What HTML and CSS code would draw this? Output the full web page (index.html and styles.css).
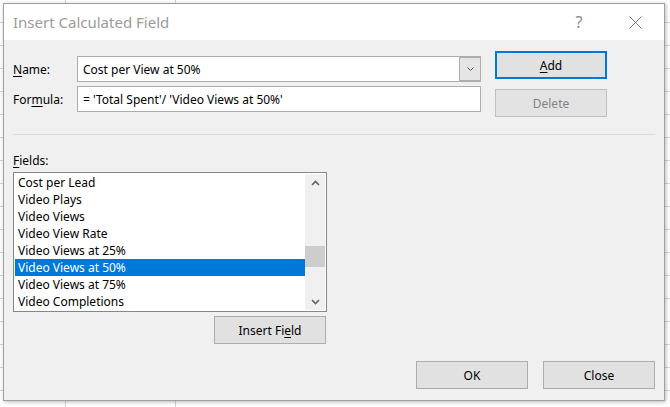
FILE: index.html
```html
<!DOCTYPE html>
<html>
<head>
<meta charset="utf-8">
<link rel="stylesheet" href="styles.css">
</head>
<body>
<div class="dialog">
  <div class="titlebar">
    <span class="title">Insert Calculated Field</span>
    <span class="help">?</span>
    <span class="close"><svg width="13" height="13" viewBox="0 0 13 13"><path d="M0.5 0.5 L12.5 12.5 M12.5 0.5 L0.5 12.5" stroke="#7a7a7a" stroke-width="1" fill="none"/></svg></span>
  </div>
  <div class="body">
    <div class="top">
      <div class="form">
        <div class="row">
          <span class="lbl"><u>N</u>ame:</span>
          <div class="combo">
            <span class="field-text">Cost per View at 50%</span>
            <span class="drop"><svg width="7" height="4" viewBox="0 0 7 4"><path d="M0.5 0.5 L3.5 3.5 L6.5 0.5" stroke="#555" stroke-width="1" fill="none"/></svg></span>
          </div>
        </div>
        <div class="row">
          <span class="lbl">For<u>m</u>ula:</span>
          <div class="textbox"><span class="field-text">= 'Total Spent'/ 'Video Views at 50%'</span></div>
        </div>
      </div>
      <div class="btncol">
        <div class="btn default"><u>A</u>dd</div>
        <div class="btn disabled">Delete</div>
      </div>
    </div>
    <div class="sep"></div>
    <div class="fields-label"><u>F</u>ields:</div>
    <div class="listbox">
      <div class="items">
        <div class="item">Cost per Lead</div>
        <div class="item">Video Plays</div>
        <div class="item">Video Views</div>
        <div class="item">Video View Rate</div>
        <div class="item">Video Views at 25%</div>
        <div class="item selected">Video Views at 50%</div>
        <div class="item">Video Views at 75%</div>
        <div class="item">Video Completions</div>
      </div>
      <div class="scrollbar">
        <div class="arrow"><svg width="9" height="6" viewBox="0 0 9 6"><path d="M1 5 L4.5 1.5 L8 5" stroke="#606060" stroke-width="1.6" fill="none"/></svg></div>
        <div class="track"><div class="thumb"></div></div>
        <div class="arrow"><svg width="9" height="6" viewBox="0 0 9 6"><path d="M1 1 L4.5 4.5 L8 1" stroke="#606060" stroke-width="1.6" fill="none"/></svg></div>
      </div>
    </div>
    <div class="insert-row">
      <div class="btn">Insert Fi<u>e</u>ld</div>
    </div>
    <div class="footer">
      <div class="btn">OK</div>
      <div class="btn">Close</div>
    </div>
  </div>
</div>
</body>
</html>
```
FILE: styles.css
```css
html, body {
  margin: 0;
  padding: 0;
}
body {
  width: 670px;
  height: 407px;
  overflow: hidden;
  background-color: #ffffff;
  background-image:
    linear-gradient(to right, transparent 65px, #d4d4d4 65px, #d4d4d4 66px, transparent 66px, transparent 175px, #d4d4d4 175px, #d4d4d4 176px, transparent 176px),
    repeating-linear-gradient(to bottom, transparent 0, transparent 22px, #d4d4d4 22px, #d4d4d4 23px);
  font-family: "Noto Sans", "Open Sans", sans-serif;
  font-size: 12px;
  color: #000;
}
.dialog {
  margin: 3px 0 0 3px;
  width: 660px;
  height: 396px;
  border: 1px solid #a0a0a0;
  background: #f0f0f0;
  box-shadow: 1px 1px 4px rgba(0, 0, 0, 0.28);
  display: flex;
  flex-direction: column;
}
.titlebar {
  height: 36px;
  background: #ffffff;
  display: flex;
  align-items: center;
  padding-left: 9px;
}
.title {
  font-size: 15px;
  color: #9b9b9b;
  flex: 1;
}
.help {
  width: 30px;
  text-align: center;
  font-size: 16px;
  color: #8a8a8a;
  margin-right: 26px;
}
.close {
  width: 30px;
  height: 13px;
  display: flex;
  justify-content: center;
  margin-right: 14px;
}
.body {
  flex: 1;
  padding: 11px 9px 0 9px;
  display: flex;
  flex-direction: column;
}
.top {
  display: flex;
  gap: 14px;
}
.form {
  width: 468px;
  margin-top: 5px;
  display: flex;
  flex-direction: column;
  gap: 4px;
}
.row {
  display: flex;
  align-items: center;
  height: 26px;
}
.lbl {
  width: 64px;
  padding-top: 1px;
}
.combo, .textbox {
  width: 404px;
  height: 26px;
  box-sizing: border-box;
  border: 1px solid #adadad;
  background: #ffffff;
  display: flex;
  align-items: center;
}
.field-text {
  flex: 1;
  padding-left: 5px;
  padding-top: 1px;
}
.drop {
  width: 21px;
  height: 24px;
  box-sizing: border-box;
  background: #e5e5e5;
  border: 1px solid #adadad;
  border-right: 0;
  display: flex;
  align-items: center;
  justify-content: center;
}
.btncol {
  display: flex;
  flex-direction: column;
  gap: 10px;
}
.btn {
  width: 112px;
  height: 28px;
  box-sizing: border-box;
  padding-top: 1px;
  border: 1px solid #adadad;
  background: #e1e1e1;
  display: flex;
  align-items: center;
  justify-content: center;
}
.btn.default {
  border: 2px solid #0078d7;
}
.btn.disabled {
  color: #838383;
  border-color: #bfbfbf;
  background: #e3e3e3;
}
.sep {
  height: 1px;
  background: #dadada;
  margin-top: 17px;
}
.fields-label {
  margin-top: 18px;
  line-height: 16px;
}
.listbox {
  margin-top: 3px;
  width: 314px;
  height: 140px;
  box-sizing: border-box;
  border: 1px solid #828790;
  background: #ffffff;
  padding: 1px;
  display: flex;
}
.items {
  width: 290px;
}
.item {
  height: 17px;
  box-sizing: border-box;
  padding-top: 1px;
  line-height: 16px;
  padding-left: 3px;
  white-space: nowrap;
}
.item.selected {
  background: #0078d7;
  color: #ffffff;
}
.scrollbar {
  width: 20px;
  height: 136px;
  background: #f0f0f0;
  display: flex;
  flex-direction: column;
}
.arrow {
  height: 17px;
  display: flex;
  align-items: center;
  justify-content: center;
}
.track {
  flex: 1;
  padding-top: 55px;
}
.thumb {
  height: 21px;
  background: #cdcdcd;
}
.insert-row {
  width: 314px;
  margin-top: 4px;
  display: flex;
  justify-content: flex-end;
}
.insert-row .btn {
  margin-right: 1px;
}
.footer {
  margin-top: 17px;
  display: flex;
  justify-content: flex-end;
  gap: 15px;
}
u {
  text-decoration-thickness: 1px;
  text-underline-offset: 2px;
}
```
